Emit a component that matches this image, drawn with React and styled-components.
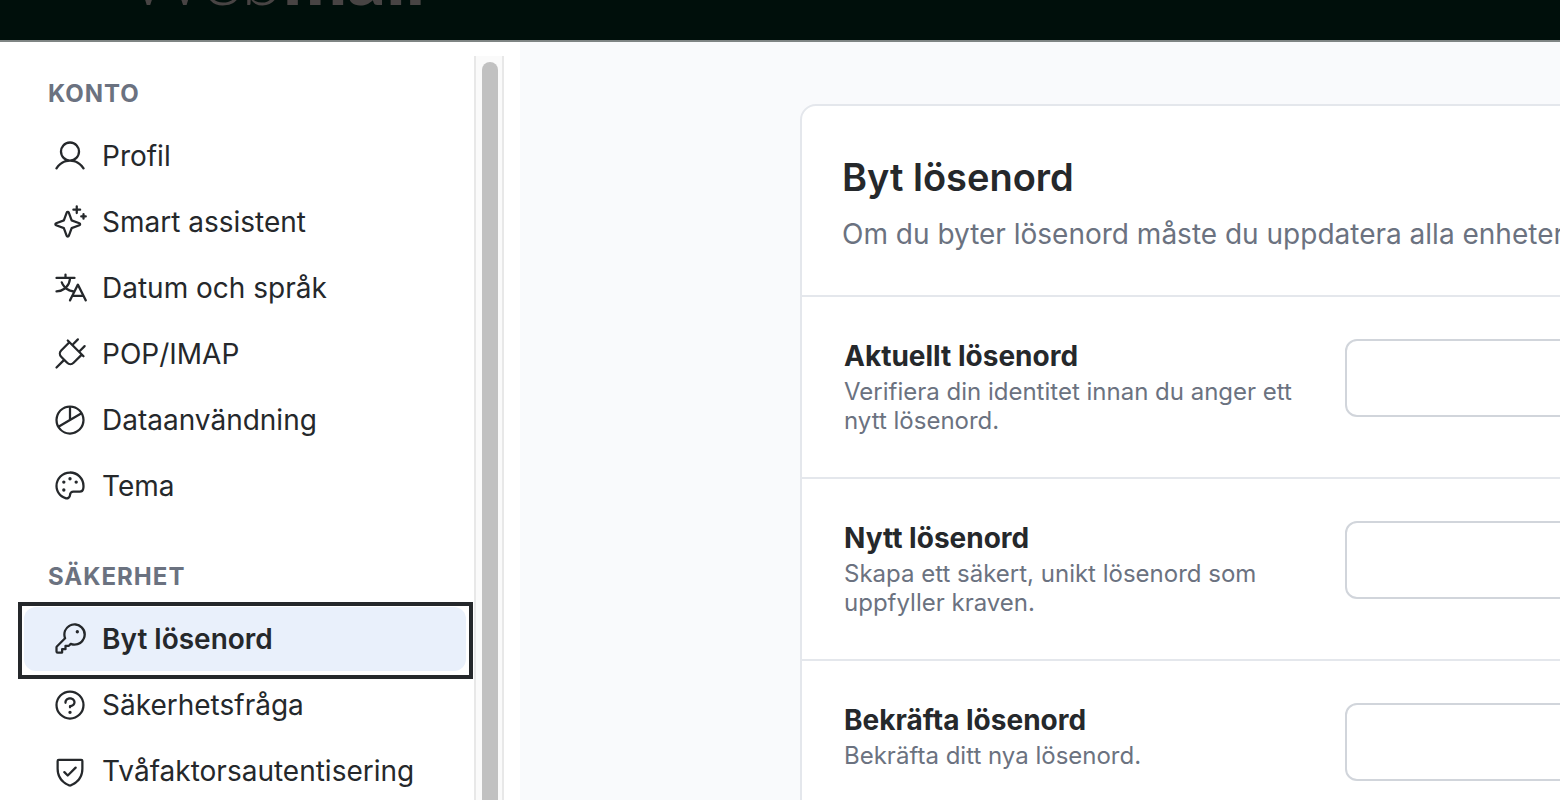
import React from "react";
import styled, { createGlobalStyle } from "styled-components";
import {
  PiUser,
  PiSparkle,
  PiTranslate,
  PiPlug,
  PiChartPie,
  PiPalette,
  PiKey,
  PiQuestion,
  PiShieldCheck,
} from "react-icons/pi";

const GlobalStyle = createGlobalStyle`
  *, *::before, *::after { box-sizing: border-box; }
  body {
    margin: 0;
    font-family: Inter, "Liberation Sans", sans-serif;
    color: #25282b;
    background: #f9fafc;
    overflow: hidden;
  }
`;

const Page = styled.div`
  display: flex;
  flex-direction: column;
  height: 100vh;
  overflow: hidden;
`;

const TopBar = styled.header`
  flex: none;
  display: flex;
  align-items: flex-end;
  height: 42px;
  padding: 0 128px 20px;
  overflow: hidden;
  background: #000f0b;
  border-bottom: 2px solid #7f8584;
`;

const Brand = styled.span`
  color: #484444;
  font-family: Lato, sans-serif;
  font-size: 76px;
  line-height: 88px;
  font-weight: 300;

  strong {
    font-weight: 900;
  }
`;

const Body = styled.div`
  flex: 1;
  display: flex;
  min-height: 0;
`;

const Sidebar = styled.aside`
  flex: none;
  display: flex;
  width: 520px;
  padding: 14px 16px 0 24px;
  background: #fff;
`;

const Nav = styled.nav`
  flex: 1;
  display: flex;
  flex-direction: column;
  gap: 42px;
  padding: 21px 8px 0 0;
`;

const SectionTitle = styled.h2`
  margin: 0 0 13px;
  padding-left: 24px;
  color: #6b7280;
  font-size: 24px;
  line-height: 34px;
  font-weight: 700;
  letter-spacing: 1px;
`;

const NavList = styled.ul`
  display: flex;
  flex-direction: column;
  gap: 2px;
  margin: 0;
  padding: 0;
  list-style: none;
`;

const NavLink = styled.a`
  position: relative;
  display: flex;
  align-items: center;
  gap: 14px;
  height: 64px;
  padding-left: 28px;
  border-radius: 12px;
  color: inherit;
  background: ${({ $active }) => ($active ? "#e9f0fb" : "transparent")};
  font-size: 28px;
  line-height: 34px;
  font-weight: ${({ $active }) => ($active ? 600 : 400)};
  white-space: nowrap;
  text-decoration: none;

  svg {
    flex: none;
    width: 36px;
    height: 36px;
  }

  &::after {
    content: ${({ $active }) => ($active ? '""' : "none")};
    position: absolute;
    inset: -5px -7px -8px -6px;
    border: 4px solid #25282b;
  }
`;

const ScrollTrack = styled.div`
  width: 30px;
  padding: 6px 4px 0 6px;
  background: #fafafa;
  border: solid #e8e8e8;
  border-width: 0 2px;
`;

const ScrollThumb = styled.div`
  height: 100%;
  background: #c1c1c1;
  border-radius: 8px 8px 0 0;
`;

const Main = styled.main`
  flex: 1;
  min-width: 0;
  padding: 62px 0 0 280px;
  overflow: hidden;
`;

const Card = styled.form`
  min-width: 1440px;
  background: #fff;
  border: 2px solid #e4e7ec;
  border-radius: 16px;
`;

const CardHeader = styled.div`
  padding: 46px 40px 40px;
`;

const Title = styled.h1`
  margin: 0 0 11px;
  font-size: 38px;
  line-height: 50px;
  font-weight: 600;
`;

const Lead = styled.p`
  margin: 0;
  color: #6b7280;
  font-size: 28px;
  line-height: 42px;
  white-space: nowrap;
`;

const FieldRow = styled.div`
  display: grid;
  grid-template-columns: 460px 1fr;
  column-gap: 41px;
  align-items: start;
  padding: 42px;
  border-top: 2px solid #e4e7ec;
`;

const FieldText = styled.div`
  display: flex;
  flex-direction: column;
  gap: 4px;
`;

const Label = styled.label`
  font-size: 28px;
  line-height: 34px;
  font-weight: 700;
`;

const Hint = styled.span`
  color: #6b7280;
  font-size: 24px;
  line-height: 29px;
`;

const PasswordInput = styled.input`
  width: 100%;
  height: 78px;
  padding: 0 24px;
  font: inherit;
  font-size: 28px;
  background: #fff;
  border: 2px solid #d1d5db;
  border-radius: 12px;
`;

const sections = [
  {
    title: "KONTO",
    items: [
      { label: "Profil", Icon: PiUser },
      { label: "Smart assistent", Icon: PiSparkle },
      { label: "Datum och språk", Icon: PiTranslate },
      { label: "POP/IMAP", Icon: PiPlug },
      { label: "Dataanvändning", Icon: PiChartPie },
      { label: "Tema", Icon: PiPalette },
    ],
  },
  {
    title: "SÄKERHET",
    items: [
      { label: "Byt lösenord", Icon: PiKey, active: true },
      { label: "Säkerhetsfråga", Icon: PiQuestion },
      { label: "Tvåfaktorsautentisering", Icon: PiShieldCheck },
    ],
  },
];

const fields = [
  {
    id: "current-password",
    label: "Aktuellt lösenord",
    hint: "Verifiera din identitet innan du anger ett nytt lösenord.",
  },
  {
    id: "new-password",
    label: "Nytt lösenord",
    hint: "Skapa ett säkert, unikt lösenord som uppfyller kraven.",
  },
  {
    id: "confirm-password",
    label: "Bekräfta lösenord",
    hint: "Bekräfta ditt nya lösenord.",
  },
];

export default function App() {
  return (
    <Page>
      <GlobalStyle />
      <TopBar>
        <Brand>
          Web<strong>mail</strong>
        </Brand>
      </TopBar>
      <Body>
        <Sidebar>
          <Nav>
            {sections.map(({ title, items }) => (
              <section key={title}>
                <SectionTitle>{title}</SectionTitle>
                <NavList>
                  {items.map(({ label, Icon, active }) => (
                    <li key={label}>
                      <NavLink
                        href="#"
                        $active={active}
                        aria-current={active ? "page" : undefined}
                      >
                        <Icon aria-hidden="true" />
                        {label}
                      </NavLink>
                    </li>
                  ))}
                </NavList>
              </section>
            ))}
          </Nav>
          <ScrollTrack>
            <ScrollThumb />
          </ScrollTrack>
        </Sidebar>
        <Main>
          <Card>
            <CardHeader>
              <Title>Byt lösenord</Title>
              <Lead>Om du byter lösenord måste du uppdatera alla enheter</Lead>
            </CardHeader>
            {fields.map(({ id, label, hint }) => (
              <FieldRow key={id}>
                <FieldText>
                  <Label htmlFor={id}>{label}</Label>
                  <Hint id={`${id}-hint`}>{hint}</Hint>
                </FieldText>
                <PasswordInput
                  id={id}
                  type="password"
                  aria-describedby={`${id}-hint`}
                />
              </FieldRow>
            ))}
          </Card>
        </Main>
      </Body>
    </Page>
  );
}
